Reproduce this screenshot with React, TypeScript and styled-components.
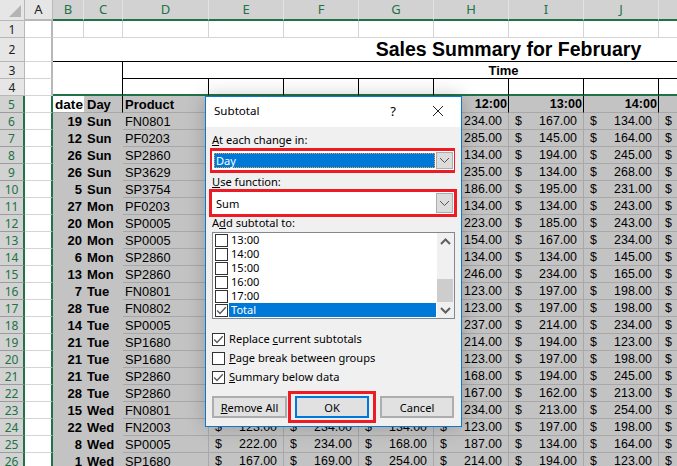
import React from "react";
import styled, { createGlobalStyle } from "styled-components";

const Global = createGlobalStyle`
  html, body { margin: 0; padding: 0; background: #fff; }
  * { box-sizing: border-box; }
`;

const Page = styled.div`
  position: relative;
  width: 677px;
  height: 466px;
  overflow: hidden;
  font-family: "Liberation Sans", Arial, sans-serif;
  color: #000;
`;

const COLS = "25px 28px 31px 39px 86px repeat(11, 75px)";

const Sheet = styled.div`
  display: grid;
  grid-template-columns: ${COLS};
  grid-template-rows: 21px 17px 24px 17px 17px repeat(22, 17px);
  width: 1034px;
`;

/* ---------- headers ---------- */
const Corner = styled.div`
  background: #e6e6e6;
  border-right: 1px solid #b8b8b8;
  border-bottom: 1px solid #b8b8b8;
  padding: 5px 3px 0 9px;
  svg { display: block; }
`;

const ColHead = styled.div<{ $on?: boolean }>`
  display: flex;
  align-items: center;
  justify-content: center;
  font: 13px "Noto Sans", sans-serif;
  padding-bottom: 2px;
  background: ${(p) => (p.$on ? "#d2d2d2" : "#e6e6e6")};
  color: ${(p) => (p.$on ? "#217346" : "#222")};
  border-right: 1px solid ${(p) => (p.$on ? "#e2e2e2" : "#b8b8b8")};
  border-bottom: 2px solid ${(p) => (p.$on ? "#217346" : "#b8b8b8")};
`;

const RowHead = styled.div<{ $on?: boolean }>`
  display: flex;
  align-items: center;
  justify-content: center;
  font: 12px "Noto Sans", sans-serif;
  background: ${(p) => (p.$on ? "#d2d2d2" : "#e6e6e6")};
  color: ${(p) => (p.$on ? "#217346" : "#222")};
  border-right: ${(p) => (p.$on ? "2px solid #217346" : "1px solid #b8b8b8")};
  border-bottom: 1px solid ${(p) => (p.$on ? "#9c9c9c" : "#b8b8b8")};
`;

/* ---------- plain cells ---------- */
const Cell = styled.div`
  background: #fff;
  border-right: 1px solid #d4d4d4;
  border-bottom: 1px solid #d4d4d4;
`;

const ColumnA = styled(Cell)<{ $on?: boolean }>`
  border-right: ${(p) => (p.$on ? "2px solid #217346" : "2px solid #b8b8b8")};
`;

const TitleCell = styled.div`
  grid-column: 3 / 16;
  display: flex;
  align-items: center;
  justify-content: center;
  padding: 0 0 0 5px;
  font-size: 19.5px;
  font-weight: 700;
  white-space: nowrap;
  border-bottom: 1px solid #000;
`;

const MergedLeft = styled.div`
  grid-column: 3 / 5;
  grid-row: span 2;
  border-right: 1px solid #000;
  border-bottom: 2px solid #217346;
`;

const TimeCell = styled.div`
  grid-column: 5 / 15;
  display: flex;
  align-items: center;
  justify-content: center;
  font-size: 13px;
  font-weight: 700;
  border-bottom: 1px solid #000;
`;

const HourBlank = styled.div`
  border-right: 1px solid #000;
  border-bottom: 2px solid #217346;
`;

/* ---------- selected data ---------- */
const Sel = styled.div`
  display: flex;
  align-items: center;
  background: #c3c3c3;
  white-space: nowrap;
  overflow: hidden;
  font-size: 12.4px;
  border-bottom: 1px solid #a8a8a8;
  border-right: 1px solid #a8a8a8;
`;

const DateHead = styled(Sel)`
  background: #fff;
  font-size: 13.6px;
  font-weight: 700;
  padding-left: 2px;
  border-right: 0;
`;

const DayHead = styled(Sel)`
  font-size: 13px;
  font-weight: 700;
  padding-left: 3px;
  border-right: 1px solid #000;
`;

const ProductHead = styled(Sel)`
  font-size: 13px;
  font-weight: 700;
  padding-left: 2px;
`;

const HourHead = styled(Sel)<{ $edge?: boolean }>`
  justify-content: flex-end;
  font-size: 12.6px;
  font-weight: 700;
  padding-right: 1px;
  border-right: 1px solid ${(p) => (p.$edge ? "#000" : "#a8a8a8")};
`;

const DateCell = styled(Sel)`
  justify-content: flex-end;
  padding-right: 2px;
  font-size: 13px;
  font-weight: 700;
  border: 0;
`;

const DayCell = styled(Sel)`
  padding-left: 3px;
  font-size: 13px;
  font-weight: 700;
  border: 0;
`;

const ProductCell = styled(Sel)`
  padding-left: 2px;
  font-size: 12.8px;
`;

const MoneyCell = styled(Sel)`
  justify-content: space-between;
  padding: 0 6px 0 6px;
`;

/* ---------- dialog ---------- */
const Dialog = styled.div`
  position: absolute;
  left: 205px;
  top: 96px;
  width: 257px;
  height: 331px;
  display: flex;
  flex-direction: column;
  border: 1px solid #0a7ad1;
  background: #f0f0f0;
  box-shadow: 0 0 18px rgba(0, 0, 0, 0.22);
  font: 11.1px "Noto Sans", sans-serif;
  color: #000;
`;

const TitleBar = styled.div`
  height: 30px;
  flex: none;
  display: flex;
  align-items: center;
  background: #fff;
  padding: 0 17px 3px 8px;
`;

const DialogTitle = styled.div`
  flex: 1;
  font-size: 11.6px;
`;

const Help = styled.div`
  font-size: 13px;
  margin-right: 36px;
`;

const Body = styled.div`
  flex: 1;
  display: flex;
  flex-direction: column;
  padding: 6px 6px 0 6px;
`;

const FieldLabel = styled.div<{ $top?: number; $lh?: number }>`
  height: 15px;
  line-height: ${(p) => p.$lh ?? 15}px;
  margin-top: ${(p) => p.$top ?? 0}px;
  u { text-decoration-thickness: 1px; }
`;

const RedFrame = styled.div<{ $w: number; $h: number; $ml: number }>`
  width: ${(p) => p.$w}px;
  height: ${(p) => p.$h}px;
  margin-left: ${(p) => p.$ml}px;
  border: 3px solid #ed1c24;
  display: flex;
  align-items: center;
  flex: none;
`;

const Combo = styled.div<{ $ml: number }>`
  flex: none;
  width: 242px;
  height: 100%;
  margin-left: ${(p) => p.$ml}px;
  display: flex;
  align-items: stretch;
  background: #fff;
  padding: 1px 1px 1px 0;
`;

const ComboValue = styled.div<{ $selected?: boolean }>`
  flex: 1;
  margin: 1px 1px 1px 2px;
  padding-left: 1px;
  display: flex;
  align-items: center;
  border: 1px dotted ${(p) => (p.$selected ? "#f0a040" : "transparent")};
  background: ${(p) => (p.$selected ? "#0078d7" : "transparent")};
  color: ${(p) => (p.$selected ? "#fff" : "#000")};
`;

const ComboArrow = styled.div`
  width: 17px;
  flex: none;
  display: flex;
  align-items: center;
  justify-content: center;
  background: #dcdcdc;
  border: 1px solid #adadad;
  svg { display: block; }
`;

const ListBox = styled.div`
  flex: none;
  width: 243px;
  height: 87px;
  display: flex;
  border: 1px solid #828790;
  background: #fff;
`;

const ListRows = styled.div`
  flex: 1;
  padding: 0 1px 0 2px;
`;

const ListRow = styled.div`
  height: 14px;
  display: flex;
  align-items: center;
  gap: 1px;
`;

const ListText = styled.div<{ $selected?: boolean }>`
  flex: 1;
  height: 14px;
  line-height: 14px;
  padding-left: 2px;
  background: ${(p) => (p.$selected ? "#0078d7" : "transparent")};
  color: ${(p) => (p.$selected ? "#fff" : "#000")};
`;

const ScrollBar = styled.div`
  width: 17px;
  flex: none;
  display: flex;
  flex-direction: column;
  align-items: center;
  background: #f0f0f0;
  padding-right: 1px;
`;

const ScrollBtn = styled.div`
  height: 16px;
  flex: none;
  display: flex;
  align-items: center;
  justify-content: center;
`;

const ScrollSpace = styled.div`
  flex: 1;
  width: 100%;
  display: flex;
  flex-direction: column;
  justify-content: flex-end;
`;

const ScrollThumb = styled.div`
  height: 23px;
  background: #cdcdcd;
`;

const Box = styled.div`
  width: 13px;
  height: 13px;
  flex: none;
  background: #fff;
  border: 1px solid #333;
  display: flex;
  align-items: center;
  justify-content: center;
  svg { display: block; }
`;

const Options = styled.div`
  margin-top: 11px;
  display: flex;
  flex-direction: column;
`;

const Option = styled.div`
  height: 19px;
  display: flex;
  align-items: center;
  gap: 4px;
`;

const OptionText = styled.span`
  margin-bottom: 2px;
`;

const Buttons = styled.div`
  margin-top: 9px;
  height: 22px;
  width: 242px;
  display: flex;
  align-items: center;
`;

const Button = styled.div<{ $default?: boolean; $w?: number }>`
  width: ${(p) => p.$w ?? 74}px;
  height: 22px;
  flex: none;
  display: flex;
  align-items: center;
  justify-content: center;
  background: #e1e1e1;
  border: 2px solid ${(p) => (p.$default ? "#0078d7" : "#adadad")};
`;

const OkFrame = styled.div`
  width: 88px;
  height: 32px;
  flex: none;
  margin: 0 4px 0 1px;
  border: 3px solid #ed1c24;
  display: flex;
  align-items: center;
  justify-content: center;
`;

/* ---------- data ---------- */
type Row = [number, string, string, number[] | null, number, number, number];

const ROWS: Row[] = [
  [19, "Sun", "FN0801", null, 234, 167, 134],
  [12, "Sun", "PF0203", null, 285, 145, 164],
  [26, "Sun", "SP2860", null, 134, 194, 245],
  [26, "Sun", "SP3629", null, 235, 134, 268],
  [5, "Sun", "SP3754", null, 186, 195, 231],
  [27, "Mon", "PF0203", null, 134, 134, 243],
  [20, "Mon", "SP0005", null, 223, 185, 243],
  [20, "Mon", "SP0005", null, 154, 167, 234],
  [6, "Mon", "SP2860", null, 134, 134, 145],
  [13, "Mon", "SP2860", null, 246, 234, 165],
  [7, "Tue", "FN0801", null, 123, 197, 198],
  [28, "Tue", "FN0802", null, 123, 197, 198],
  [14, "Tue", "SP0005", null, 237, 214, 234],
  [21, "Tue", "SP1680", null, 214, 194, 123],
  [21, "Tue", "SP1680", null, 123, 197, 198],
  [21, "Tue", "SP2860", null, 168, 194, 245],
  [28, "Tue", "SP2860", null, 167, 162, 213],
  [15, "Wed", "FN0801", null, 234, 213, 254],
  [22, "Wed", "FN2003", [123, 234, 134], 123, 197, 198],
  [8, "Wed", "SP0005", [222, 234, 168], 187, 134, 164],
  [1, "Wed", "SP1680", [167, 169, 254], 214, 194, 123],
];

const LETTERS = ["B", "C", "D", "E", "F", "G", "H", "I", "J", "K", "L", "M", "N", "O"];
const HOURS = ["", "", "", "12:00", "13:00", "14:00", "", "", "", "", ""];

const Money = ({ v, clip }: { v?: number; clip?: boolean }) => (
  <MoneyCell>
    {(v !== undefined || clip) && <span>$</span>}
    {v !== undefined && <span>{v.toFixed(2)}</span>}
  </MoneyCell>
);

const Chevron = ({ up, color = "#606060", w = 1.4 }: { up?: boolean; color?: string; w?: number }) => (
  <svg width="11" height="7" viewBox="0 0 11 7">
    <path d={up ? "M1 6 L5.5 1.5 L10 6" : "M1 1 L5.5 5.5 L10 1"} fill="none" stroke={color} strokeWidth={w} />
  </svg>
);

const Check = () => (
  <svg width="11" height="11" viewBox="0 0 11 11">
    <path d="M1.2 5.6 L4 8.4 L9.8 2.2" fill="none" stroke="#5a5a5a" strokeWidth="1.4" />
  </svg>
);

const CheckBox = ({ on }: { on?: boolean }) => <Box>{on && <Check />}</Box>;

export default function App() {
  return (
    <Page>
      <Global />
      <Sheet>
        <Corner>
          <svg width="12" height="12" viewBox="0 0 12 12">
            <path d="M12 0 V12 H0 Z" fill="#b4b4b4" />
          </svg>
        </Corner>
        <ColHead>A</ColHead>
        {LETTERS.map((l) => (
          <ColHead key={l} $on>
            {l}
          </ColHead>
        ))}

        <RowHead>1</RowHead>
        <ColumnA />
        {LETTERS.map((l) => (
          <Cell key={l} />
        ))}

        <RowHead>2</RowHead>
        <ColumnA />
        <TitleCell>Sales Summary for February</TitleCell>
        <Cell />

        <RowHead>3</RowHead>
        <ColumnA />
        <MergedLeft />
        <TimeCell>Time</TimeCell>
        <Cell />
        <Cell />

        <RowHead>4</RowHead>
        <ColumnA />
        {LETTERS.slice(2).map((l) => (
          <HourBlank key={l} />
        ))}

        <RowHead $on>5</RowHead>
        <ColumnA $on />
        <DateHead>date</DateHead>
        <DayHead>Day</DayHead>
        <ProductHead>Product</ProductHead>
        {HOURS.map((h, i) => (
          <HourHead key={i} $edge={h !== ""}>
            {h}
          </HourHead>
        ))}

        {ROWS.map((r, i) => (
          <React.Fragment key={i}>
            <RowHead $on>{i + 6}</RowHead>
            <ColumnA $on />
            <DateCell>{r[0]}</DateCell>
            <DayCell>{r[1]}</DayCell>
            <ProductCell>{r[2]}</ProductCell>
            <Money v={r[3]?.[0]} />
            <Money v={r[3]?.[1]} />
            <Money v={r[3]?.[2]} />
            <Money v={r[4]} />
            <Money v={r[5]} />
            <Money v={r[6]} />
            <Money clip />
            <Sel />
            <Sel />
            <Sel />
            <Sel />
          </React.Fragment>
        ))}
      </Sheet>

      <Dialog>
        <TitleBar>
          <DialogTitle>Subtotal</DialogTitle>
          <Help>?</Help>
          <svg width="12" height="12" viewBox="0 0 12 12">
            <path d="M1 1 L11 11 M11 1 L1 11" stroke="#222" strokeWidth="1" fill="none" />
          </svg>
        </TitleBar>
        <Body>
          <FieldLabel $lh={13}>
            <u>A</u>t each change in:
          </FieldLabel>
          <RedFrame $w={245} $h={25} $ml={-2}>
            <Combo $ml={-1}>
              <ComboValue $selected>Day</ComboValue>
              <ComboArrow>
                <Chevron w={1} color="#555" />
              </ComboArrow>
            </Combo>
          </RedFrame>
          <FieldLabel $top={1}>
            <u>U</u>se function:
          </FieldLabel>
          <RedFrame $w={248} $h={28} $ml={-3}>
            <Combo $ml={0}>
              <ComboValue>Sum</ComboValue>
              <ComboArrow>
                <Chevron w={1} color="#555" />
              </ComboArrow>
            </Combo>
          </RedFrame>
          <FieldLabel $lh={12}>
            A<u>d</u>d subtotal to:
          </FieldLabel>
          <ListBox>
            <ListRows>
              {["13:00", "14:00", "15:00", "16:00", "17:00", "Total"].map((t) => (
                <ListRow key={t}>
                  <CheckBox on={t === "Total"} />
                  <ListText $selected={t === "Total"}>{t}</ListText>
                </ListRow>
              ))}
            </ListRows>
            <ScrollBar>
              <ScrollBtn>
                <Chevron up w={2} />
              </ScrollBtn>
              <ScrollSpace>
                <ScrollThumb />
              </ScrollSpace>
              <ScrollBtn>
                <Chevron w={2} />
              </ScrollBtn>
            </ScrollBar>
          </ListBox>
          <Options>
            <Option>
              <CheckBox on />
              <OptionText>
                Replace <u>c</u>urrent subtotals
              </OptionText>
            </Option>
            <Option>
              <CheckBox />
              <OptionText>
                <u>P</u>age break between groups
              </OptionText>
            </Option>
            <Option>
              <CheckBox on />
              <OptionText>
                <u>S</u>ummary below data
              </OptionText>
            </Option>
          </Options>
          <Buttons>
            <Button $w={75}>
              <span>
                <u>R</u>emove All
              </span>
            </Button>
            <OkFrame>
              <Button $default>OK</Button>
            </OkFrame>
            <Button>Cancel</Button>
          </Buttons>
        </Body>
      </Dialog>
    </Page>
  );
}
